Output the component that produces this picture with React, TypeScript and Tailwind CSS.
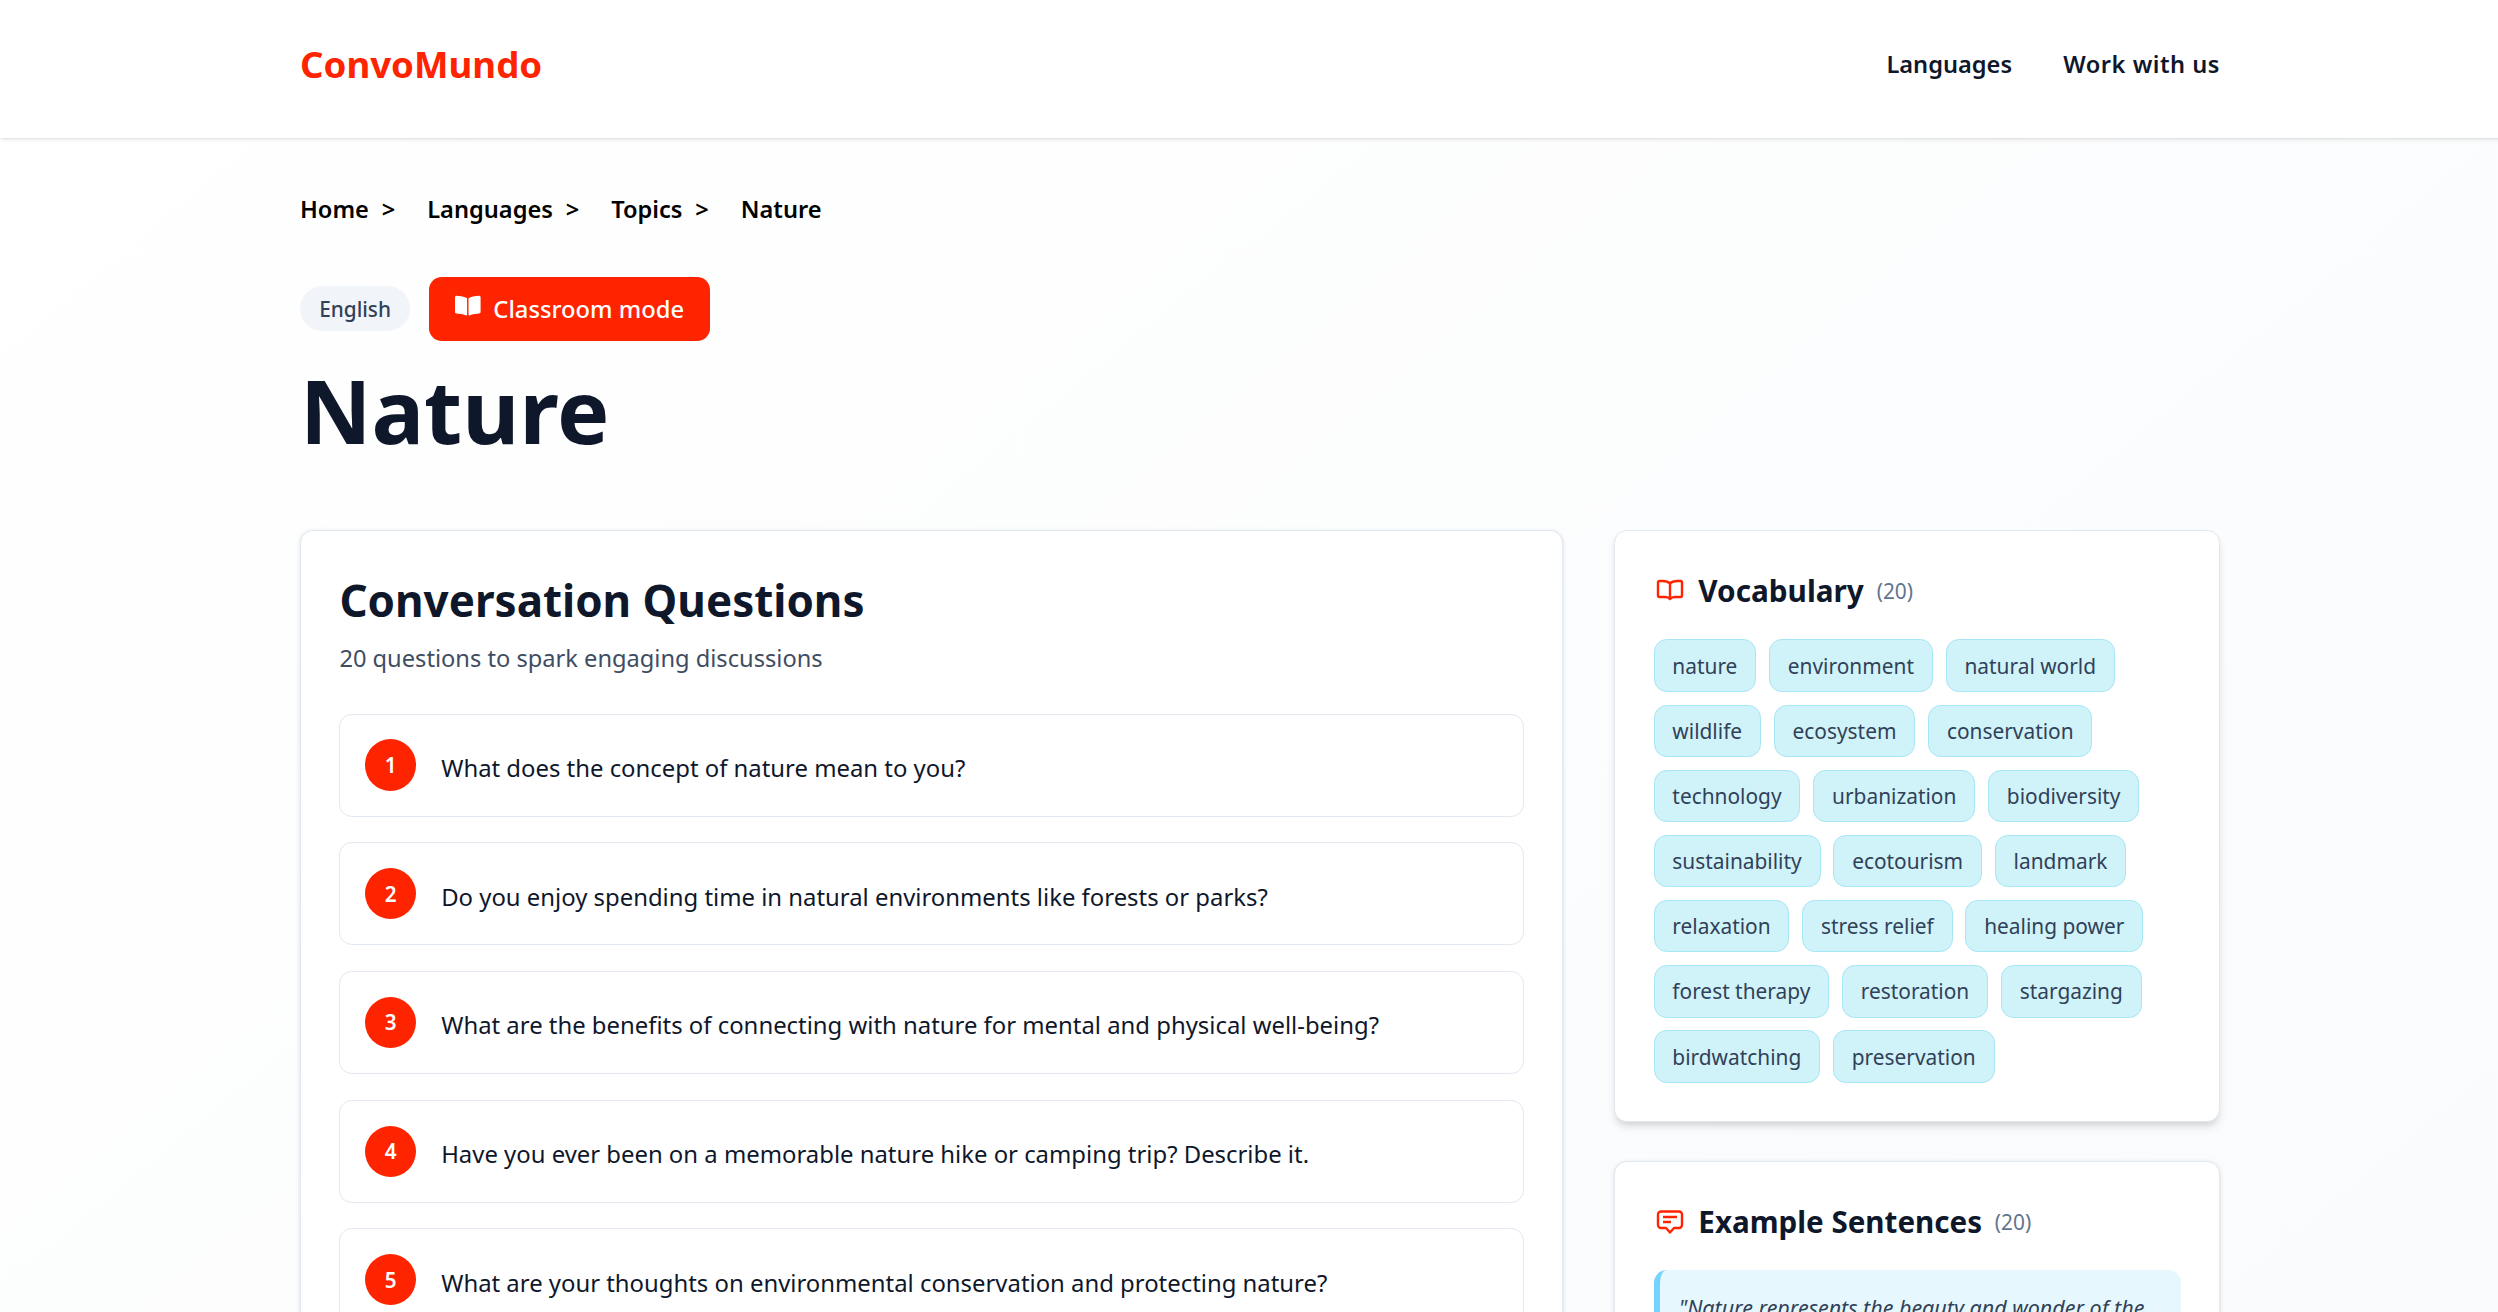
import { FaBookOpen } from "react-icons/fa";

const QUESTIONS = [
  "What does the concept of nature mean to you?",
  "Do you enjoy spending time in natural environments like forests or parks?",
  "What are the benefits of connecting with nature for mental and physical well-being?",
  "Have you ever been on a memorable nature hike or camping trip? Describe it.",
  "What are your thoughts on environmental conservation and protecting nature?",
];

const VOCABULARY = [
  "nature", "environment", "natural world", "wildlife", "ecosystem", "conservation", "technology",
  "urbanization", "biodiversity", "sustainability", "ecotourism", "landmark", "relaxation",
  "stress relief", "healing power", "forest therapy", "restoration", "stargazing", "birdwatching", "preservation",
];

function BookIcon() {
  return (
    <svg viewBox="-2.5 -4.5 32 32" fill="none" stroke="#ff2400" strokeWidth="2.4" strokeLinejoin="round" className="mr-2 h-5 w-5 shrink-0">
      <path d="M13.5 4C12 2.4 9.5 1.5 6 1.5H3A1.5 1.5 0 0 0 1.5 3V16a1.5 1.5 0 0 0 1.5 1.5H8C10.5 17.5 12.5 18 13.5 19.5C14.5 18 16.5 17.5 19 17.5H24A1.5 1.5 0 0 0 25.5 16V3A1.5 1.5 0 0 0 24 1.5H21C17.5 1.5 15 2.4 13.5 4ZM13.5 4V19" />
    </svg>
  );
}

function ChatIcon() {
  return (
    <svg viewBox="-3 -4 32 32" fill="none" stroke="#ff2400" strokeWidth="2.4" strokeLinejoin="round" className="mr-2 h-5 w-5 shrink-0">
      <path d="M4 1.5H22A3 3 0 0 1 25 4.5V15A3 3 0 0 1 22 18H17L13 22.5L9 18H4A3 3 0 0 1 1 15V4.5A3 3 0 0 1 4 1.5Z" />
      <path d="M6 7H20M6 12H14" />
    </svg>
  );
}

function Crumb({ label, last }: { label: string; last?: boolean }) {
  return (
    <li className="flex items-center font-semibold text-black">
      <a href="#">{label}</a>
      {!last && <span className="mr-[20px] ml-2">&gt;</span>}
    </li>
  );
}

export default function App() {
  return (
    <div className="h-[1312px] overflow-hidden">
      <div className="min-h-screen w-[1575px] bg-gradient-to-br from-white to-slate-50 font-['Noto_Sans',sans-serif] text-slate-900 [font-size-adjust:0.5] [zoom:1.6]">
        <header className="bg-white shadow-sm">
          <div className="mx-auto flex h-[86px] max-w-[1200px] items-center justify-between pb-1.5">
            <a href="#" className="text-[25px] font-bold text-[#ff2400]">ConvoMundo</a>
            <nav className="flex items-center gap-8">
              <a href="#" className="font-semibold">Languages</a>
              <a href="#" className="font-semibold tracking-[0.02em]">Work with us</a>
            </nav>
          </div>
        </header>

        <main className="mx-auto max-w-[1200px] pt-8">
          <ol className="mb-[31px] flex translate-y-[0.5px] items-center">
            <Crumb label="Home" />
            <Crumb label="Languages" />
            <Crumb label="Topics" />
            <Crumb label="Nature" last />
          </ol>

          <div className="flex items-center gap-3">
            <span className="rounded-full bg-slate-100 px-3 py-1 text-sm font-medium text-slate-700">English</span>
            <button className="flex items-center gap-2 rounded-lg bg-[#ff2400] px-4 py-2 font-medium text-white">
              <FaBookOpen className="h-4 w-4 -translate-y-0.5" />
              Classroom mode
            </button>
          </div>

          <h1 className="mt-[13px] mb-[45px] text-6xl font-bold">Nature</h1>

          <div className="grid grid-cols-3 gap-8">
            <section className="col-span-2 rounded-lg border border-slate-200 bg-white p-6 shadow-sm">
              <h2 className="translate-y-0.5 text-3xl font-bold">Conversation Questions</h2>
              <p className="mt-2 mb-[22.6px] text-[15.85px] text-[#3f4d63]">20 questions to spark engaging discussions</p>
              <div className="flex flex-col gap-4">
                {QUESTIONS.map((q, i) => (
                  <div key={q} className="flex items-center gap-[15.5px] rounded-lg border border-slate-200 px-[15.5px] py-[15.6px]">
                    <span className="flex h-8 w-8 shrink-0 items-center justify-center rounded-full bg-[#ff2400] text-sm font-semibold text-white">{i + 1}</span>
                    <p className="translate-y-0.5">{q}</p>
                  </div>
                ))}
              </div>
            </section>

            <aside className="flex flex-col gap-6">
              <section className="rounded-lg border border-slate-200 bg-white p-6 shadow-md">
                <div className="mb-4 flex items-center">
                  <BookIcon />
                  <h3 className="text-[20.3px] leading-7 font-bold">Vocabulary</h3>
                  <span className="ml-2 text-sm text-slate-500">(20)</span>
                </div>
                <div className="flex flex-wrap gap-2">
                  {VOCABULARY.map((w) => (
                    <span key={w} className="rounded-lg border border-[#a6e6f5] bg-[#d0f3fa] px-[11.15px] py-[5.75px] text-sm text-slate-700">{w}</span>
                  ))}
                </div>
              </section>

              <section className="rounded-lg border border-slate-200 bg-white p-6 shadow-sm">
                <div className="mb-4 flex items-center">
                  <ChatIcon />
                  <h3 className="text-[20.2px] leading-7 font-bold">Example Sentences</h3>
                  <span className="ml-2 text-sm text-slate-500">(20)</span>
                </div>
                <blockquote className="rounded-lg border-l-4 border-sky-300 bg-[#e6f8fd] p-3 text-[14.4px] leading-relaxed text-slate-700 italic">
                  "Nature represents the beauty and wonder of the natural world."
                </blockquote>
              </section>
            </aside>
          </div>
        </main>
      </div>
    </div>
  );
}
